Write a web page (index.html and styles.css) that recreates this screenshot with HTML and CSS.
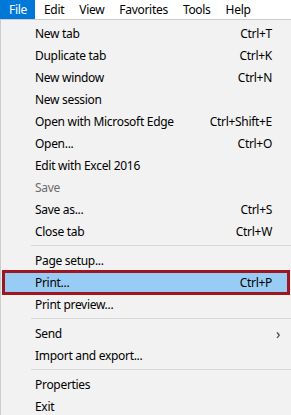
FILE: index.html
```html
<!DOCTYPE html>
<html lang="en">
<head>
    <meta charset="UTF-8">
    <meta name="viewport" content="width=device-width, initial-scale=1.0">
    <title>File menu</title>
    <link rel="stylesheet" href="styles.css">
</head>
<body>
    <div class="menubar">
        <span class="menubar-item active">File</span>
        <span class="menubar-item">Edit</span>
        <span class="menubar-item">View</span>
        <span class="menubar-item">Favorites</span>
        <span class="menubar-item">Tools</span>
        <span class="menubar-item">Help</span>
    </div>

    <div class="menu">
        <div class="menu-item"><span>New tab</span><span class="shortcut">Ctrl+T</span></div>
        <div class="menu-item"><span>Duplicate tab</span><span class="shortcut">Ctrl+K</span></div>
        <div class="menu-item"><span>New window</span><span class="shortcut">Ctrl+N</span></div>
        <div class="menu-item"><span>New session</span></div>
        <div class="menu-item"><span>Open with Microsoft Edge</span><span class="shortcut">Ctrl+Shift+E</span></div>
        <div class="menu-item"><span>Open...</span><span class="shortcut">Ctrl+O</span></div>
        <div class="menu-item"><span>Edit with Excel 2016</span></div>
        <div class="menu-item disabled"><span>Save</span></div>
        <div class="menu-item"><span>Save as...</span><span class="shortcut">Ctrl+S</span></div>
        <div class="menu-item"><span>Close tab</span><span class="shortcut">Ctrl+W</span></div>
        <div class="separator"></div>
        <div class="menu-item"><span>Page setup...</span></div>
        <div class="menu-item selected"><span>Print...</span><span class="shortcut">Ctrl+P</span></div>
        <div class="menu-item"><span>Print preview...</span></div>
        <div class="separator"></div>
        <div class="menu-item"><span>Send</span><span class="submenu-arrow">&#x203A;</span></div>
        <div class="menu-item"><span>Import and export...</span></div>
        <div class="separator"></div>
        <div class="menu-item"><span>Properties</span></div>
        <div class="menu-item"><span>Exit</span></div>
    </div>
</body>
</html>
```

FILE: styles.css
```css
:root {
    --color-text: #000000;
    --color-disabled: #6d6d6d;
    --color-menu: #f2f2f2;
    --color-accent: #0078d7;
    --color-select: #99ccf5;
    --color-mark: #a0161e;
    --color-line: #d7d7d7;
}

* {
    margin: 0;
    padding: 0;
    box-sizing: border-box;
}

body {
    width: 291px;
    height: 415px;
    overflow: hidden;
    background-color: var(--color-menu);
    color: var(--color-text);
    font-family: 'Noto Sans', 'Liberation Sans', sans-serif;
    font-size: 12px;
    letter-spacing: -0.3px;
}

.menubar {
    display: flex;
    height: 20px;
    background-color: #ffffff;
    border-bottom: 1px solid #cccccc;
}

.menubar-item {
    display: flex;
    align-items: center;
    height: 19px;
    padding: 0 6px 0 9px;
}

.menubar-item.active {
    background-color: var(--color-accent);
    color: #ffffff;
    padding: 0 8px 0 9px;
}

.menu {
    padding-top: 2px;
    border-left: 1px solid #cccccc;
}

.menu-item {
    position: relative;
    display: flex;
    align-items: center;
    justify-content: space-between;
    height: 22px;
    padding: 0 19px 0 34px;
}

.menu-item.disabled {
    color: var(--color-disabled);
}

.menu-item.selected {
    background-color: var(--color-select);
    margin: 0 1px 0 1px;
    padding-left: 33px;
    padding-right: 18px;
}

/* recuadro de resaltado */
.menu-item.selected::after {
    content: '';
    position: absolute;
    top: -1px;
    bottom: -2px;
    left: 0;
    right: 0;
    border: 3px solid var(--color-mark);
}

.submenu-arrow {
    margin-right: -8px;
    font-size: 14px;
    color: #333333;
}

.separator {
    height: 7px;
    margin-left: 30px;
    display: flex;
    align-items: center;
}

.separator::before {
    content: '';
    flex: 1;
    height: 1px;
    background-color: var(--color-line);
}
```
